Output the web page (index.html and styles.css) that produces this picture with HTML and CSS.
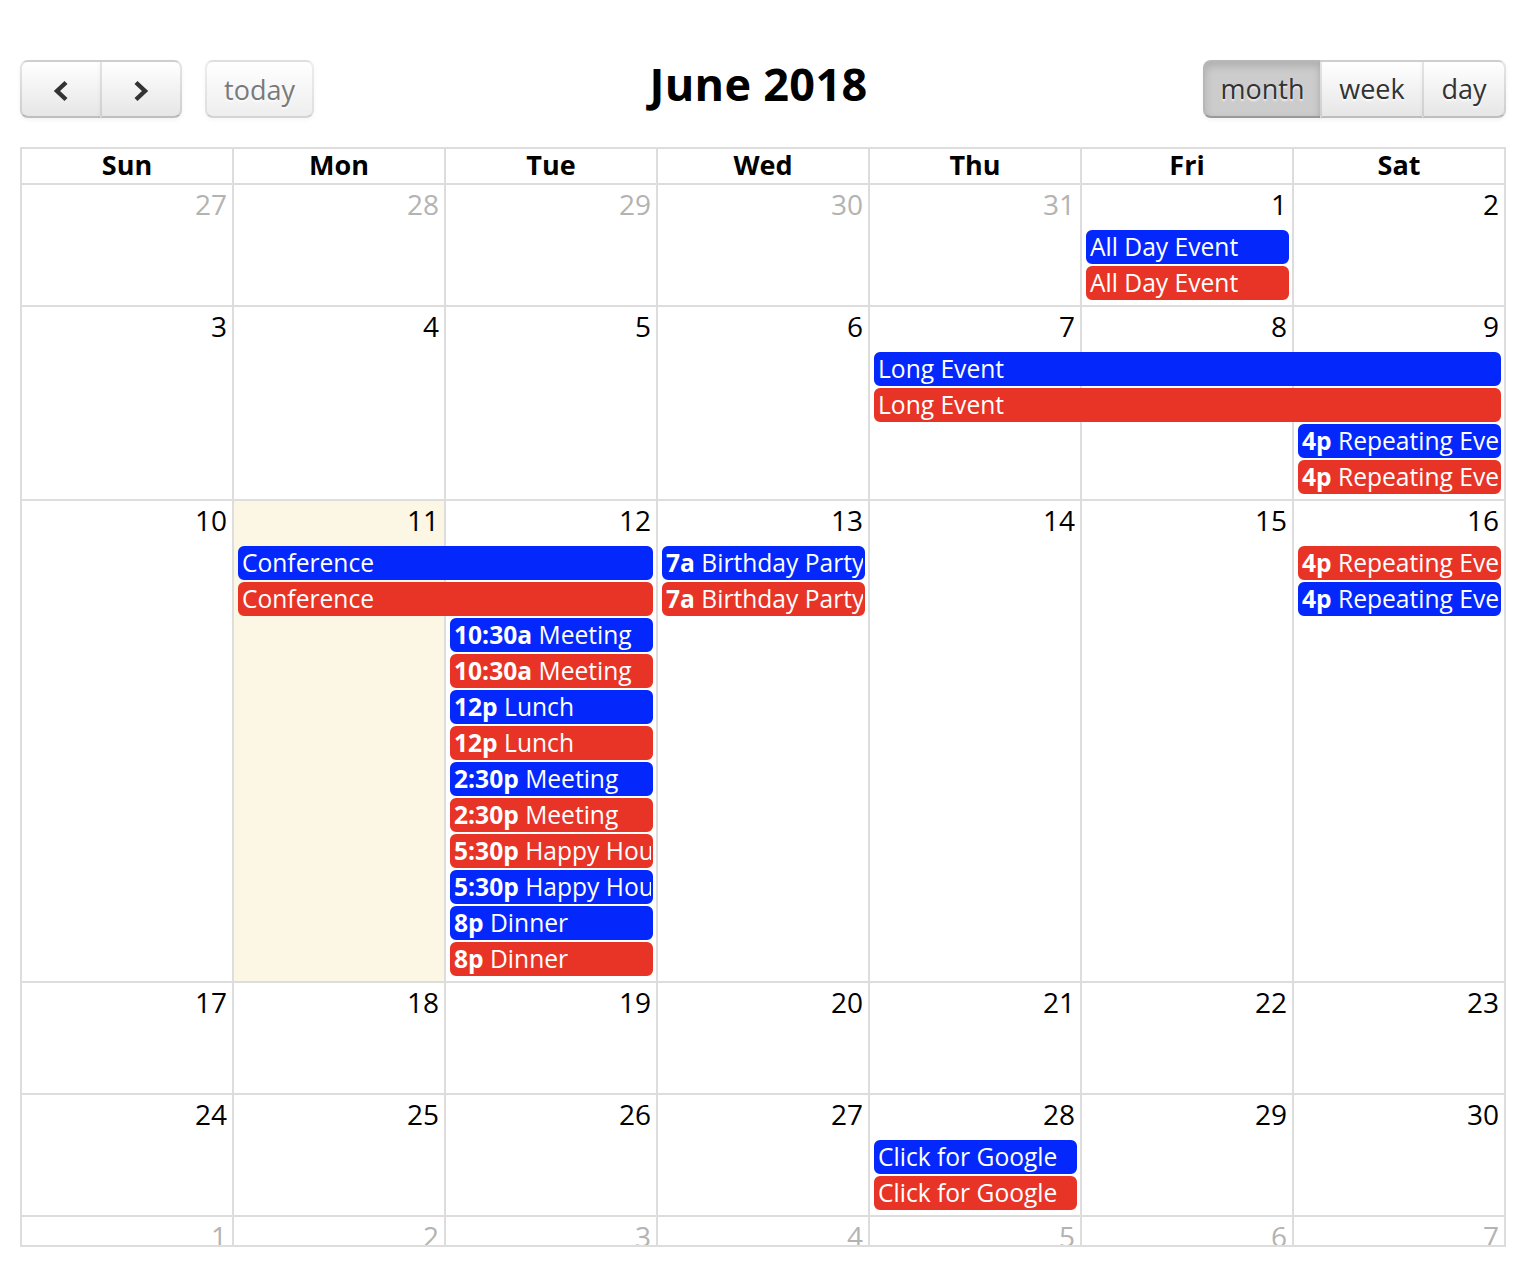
FILE: index.html
```html
<!DOCTYPE html>
<html>
<head>
<meta charset="utf-8">
<link rel="stylesheet" href="styles.css">
</head>
<body>
<div class="page">
  <div class="toolbar">
    <div class="tb-left">
      <div class="btn-group">
        <button class="btn btn-icon btn-first"><svg width="18" height="22" viewBox="0 0 18 22"><polyline points="14,2.5 5,11 14,19.5" fill="none" stroke="#333" stroke-width="4.4"/></svg></button>
        <button class="btn btn-icon btn-last"><svg width="18" height="22" viewBox="0 0 18 22"><polyline points="4,2.5 13,11 4,19.5" fill="none" stroke="#333" stroke-width="4.4"/></svg></button>
      </div>
      <button class="btn btn-today" disabled>today</button>
    </div>
    <div class="tb-center"><h2 class="title">June 2018</h2></div>
    <div class="tb-right">
      <div class="btn-group">
        <button class="btn btn-first btn-active btn-month">month</button>
        <button class="btn btn-mid btn-week">week</button>
        <button class="btn btn-last btn-day">day</button>
      </div>
    </div>
  </div>

  <div class="grid">
    <div class="head">
      <div class="hcell">Sun</div><div class="hcell">Mon</div><div class="hcell">Tue</div><div class="hcell">Wed</div><div class="hcell">Thu</div><div class="hcell">Fri</div><div class="hcell">Sat</div>
    </div>
    <div class="body">
      <!-- week 1 -->
      <div class="week rows2">
        <div class="bg c1"></div><div class="bg c2"></div><div class="bg c3"></div><div class="bg c4"></div><div class="bg c5"></div><div class="bg c6"></div><div class="bg c7"></div>
        <div class="num other c1">27</div><div class="num other c2">28</div><div class="num other c3">29</div><div class="num other c4">30</div><div class="num other c5">31</div><div class="num c6">1</div><div class="num c7">2</div>
        <div class="ev blue c6 r1">All Day Event</div>
        <div class="ev red c6 r2">All Day Event</div>
      </div>
      <!-- week 2 -->
      <div class="week rows4">
        <div class="bg c1"></div><div class="bg c2"></div><div class="bg c3"></div><div class="bg c4"></div><div class="bg c5"></div><div class="bg c6"></div><div class="bg c7"></div>
        <div class="num c1">3</div><div class="num c2">4</div><div class="num c3">5</div><div class="num c4">6</div><div class="num c5">7</div><div class="num c6">8</div><div class="num c7">9</div>
        <div class="ev blue span-thu-sat r1">Long Event</div>
        <div class="ev red span-thu-sat r2">Long Event</div>
        <div class="ev blue c7 r3"><b>4p</b> Repeating Event</div>
        <div class="ev red c7 r4"><b>4p</b> Repeating Event</div>
      </div>
      <!-- week 3 -->
      <div class="week rows12">
        <div class="bg c1"></div><div class="bg c2 today"></div><div class="bg c3"></div><div class="bg c4"></div><div class="bg c5"></div><div class="bg c6"></div><div class="bg c7"></div>
        <div class="num c1">10</div><div class="num c2">11</div><div class="num c3">12</div><div class="num c4">13</div><div class="num c5">14</div><div class="num c6">15</div><div class="num c7">16</div>
        <div class="ev blue span-mon-tue r1">Conference</div>
        <div class="ev red span-mon-tue r2">Conference</div>
        <div class="ev blue c4 r1"><b>7a</b> Birthday Party</div>
        <div class="ev red c4 r2"><b>7a</b> Birthday Party</div>
        <div class="ev red c7 r1"><b>4p</b> Repeating Event</div>
        <div class="ev blue c7 r2"><b>4p</b> Repeating Event</div>
        <div class="ev blue c3 r3"><b>10:30a</b> Meeting</div>
        <div class="ev red c3 r4"><b>10:30a</b> Meeting</div>
        <div class="ev blue c3 r5"><b>12p</b> Lunch</div>
        <div class="ev red c3 r6"><b>12p</b> Lunch</div>
        <div class="ev blue c3 r7"><b>2:30p</b> Meeting</div>
        <div class="ev red c3 r8"><b>2:30p</b> Meeting</div>
        <div class="ev red c3 r9"><b>5:30p</b> Happy Hour</div>
        <div class="ev blue c3 r10"><b>5:30p</b> Happy Hour</div>
        <div class="ev blue c3 r11"><b>8p</b> Dinner</div>
        <div class="ev red c3 r12"><b>8p</b> Dinner</div>
      </div>
      <!-- week 4 -->
      <div class="week rows0">
        <div class="bg c1"></div><div class="bg c2"></div><div class="bg c3"></div><div class="bg c4"></div><div class="bg c5"></div><div class="bg c6"></div><div class="bg c7"></div>
        <div class="num c1">17</div><div class="num c2">18</div><div class="num c3">19</div><div class="num c4">20</div><div class="num c5">21</div><div class="num c6">22</div><div class="num c7">23</div>
      </div>
      <!-- week 5 -->
      <div class="week rows2">
        <div class="bg c1"></div><div class="bg c2"></div><div class="bg c3"></div><div class="bg c4"></div><div class="bg c5"></div><div class="bg c6"></div><div class="bg c7"></div>
        <div class="num c1">24</div><div class="num c2">25</div><div class="num c3">26</div><div class="num c4">27</div><div class="num c5">28</div><div class="num c6">29</div><div class="num c7">30</div>
        <div class="ev blue c5 r1">Click for Google</div>
        <div class="ev red c5 r2">Click for Google</div>
      </div>
      <!-- week 6 -->
      <div class="week rows0">
        <div class="bg c1"></div><div class="bg c2"></div><div class="bg c3"></div><div class="bg c4"></div><div class="bg c5"></div><div class="bg c6"></div><div class="bg c7"></div>
        <div class="num other c1">1</div><div class="num other c2">2</div><div class="num other c3">3</div><div class="num other c4">4</div><div class="num other c5">5</div><div class="num other c6">6</div><div class="num other c7">7</div>
      </div>
    </div>
  </div>
</div>
</body>
</html>
```

FILE: styles.css
```css
* { box-sizing: border-box; }
html, body { margin: 0; padding: 0; background: #fff; }
body { font-family: "Open Sans", "Noto Sans", sans-serif; color: #000; }

.page { padding: 60px 0 0 20px; width: 1506px; }

/* toolbar */
.toolbar { display: flex; align-items: center; height: 58px; margin-bottom: 29px; }
.tb-left { display: flex; align-items: center; gap: 23px; }
.tb-center { flex: 1; text-align: center; }
.tb-right { display: flex; }
.title { margin: 0; font-size: 45px; font-weight: 700; line-height: 1; position: relative; top: -6px; letter-spacing: 0.3px; }

.btn-group { display: flex; }
.btn {
  font-family: "Open Sans", "Noto Sans", sans-serif;
  font-size: 27px;
  height: 58px;
  padding: 0 17px;
  margin: 0;
  color: #333;
  background-color: #f5f5f5;
  background-image: linear-gradient(#ffffff, #e6e6e6);
  border: 2px solid;
  border-color: rgba(0,0,0,.1) rgba(0,0,0,.1) rgba(0,0,0,.25);
  border-radius: 8px;
  box-shadow: inset 0 2px 0 rgba(255,255,255,.2), 0 2px 4px rgba(0,0,0,.05);
  text-shadow: 0 2px 2px rgba(255,255,255,.75);
  display: flex; align-items: center; justify-content: center;
  line-height: 1;
}
.btn-icon { width: 82px; padding: 0; padding-top: 4px; }
.btn-first { border-top-right-radius: 0; border-bottom-right-radius: 0; }
.btn-last { border-top-left-radius: 0; border-bottom-left-radius: 0; margin-left: -2px; }
.btn-mid { border-radius: 0; margin-left: -2px; }
.btn-today { width: 109px; opacity: .65; padding-bottom: 0; }
.btn-month { width: 119px; padding-bottom: 2px; }
.btn-week { width: 104px; padding-bottom: 2px; }
.btn-day { width: 84px; padding-bottom: 2px; }
.btn-active {
  background-color: #ccc;
  background-image: none;
  box-shadow: inset 0 4px 8px rgba(0,0,0,.15), 0 2px 4px rgba(0,0,0,.05);
}

/* grid */
.grid { width: 1486px; border-top: 2px solid #ddd; border-left: 2px solid #ddd; border-bottom: 2px solid #ddd; }
.head { display: grid; grid-template-columns: repeat(7, 212px); }
.hcell {
  height: 36px; border-right: 2px solid #ddd; border-bottom: 2px solid #ddd;
  text-align: center; font-weight: 700; font-size: 27px; line-height: 32px;
}
.body { height: 1060px; overflow: hidden; }

.week { display: grid; grid-template-columns: repeat(7, 212px); min-height: 112px; }
.rows0 { grid-template-rows: 43px minmax(7px, 1fr); }
.rows2 { grid-template-rows: 43px repeat(2, 36px) minmax(7px, 1fr); }
.rows4 { grid-template-rows: 43px repeat(4, 36px) minmax(7px, 1fr); }
.rows12 { grid-template-rows: 43px repeat(12, 36px) minmax(7px, 1fr); }

.bg { grid-row: 1 / -1; border-right: 2px solid #ddd; border-bottom: 2px solid #ddd; }
.bg.today { background: #fcf6e4; }

.c1 { grid-column: 1; } .c2 { grid-column: 2; } .c3 { grid-column: 3; } .c4 { grid-column: 4; }
.c5 { grid-column: 5; } .c6 { grid-column: 6; } .c7 { grid-column: 7; }
.span-thu-sat { grid-column: 5 / 8; }
.span-mon-tue { grid-column: 2 / 4; }

.num {
  grid-row: 1; text-align: right; font-size: 28px; line-height: 39px;
  padding: 0 7px 0 0; color: #000;
}
.num.other { color: #b3b3b3; }

.r1 { grid-row: 2; } .r2 { grid-row: 3; } .r3 { grid-row: 4; } .r4 { grid-row: 5; }
.r5 { grid-row: 6; } .r6 { grid-row: 7; } .r7 { grid-row: 8; } .r8 { grid-row: 9; }
.r9 { grid-row: 10; } .r10 { grid-row: 11; } .r11 { grid-row: 12; } .r12 { grid-row: 13; }

.ev {
  align-self: start;
  margin: 2px 5px 0 4px;
  height: 34px;
  border: 2px solid;
  border-radius: 6px;
  padding: 0 2px;
  color: #fff;
  font-size: 24.6px;
  line-height: 29px;
  white-space: nowrap;
  overflow: hidden;
}
.ev b { font-weight: 700; }
.blue { background: #0428fc; border-color: #0428fc; }
.red { background: #e83426; border-color: #e83426; }
```
